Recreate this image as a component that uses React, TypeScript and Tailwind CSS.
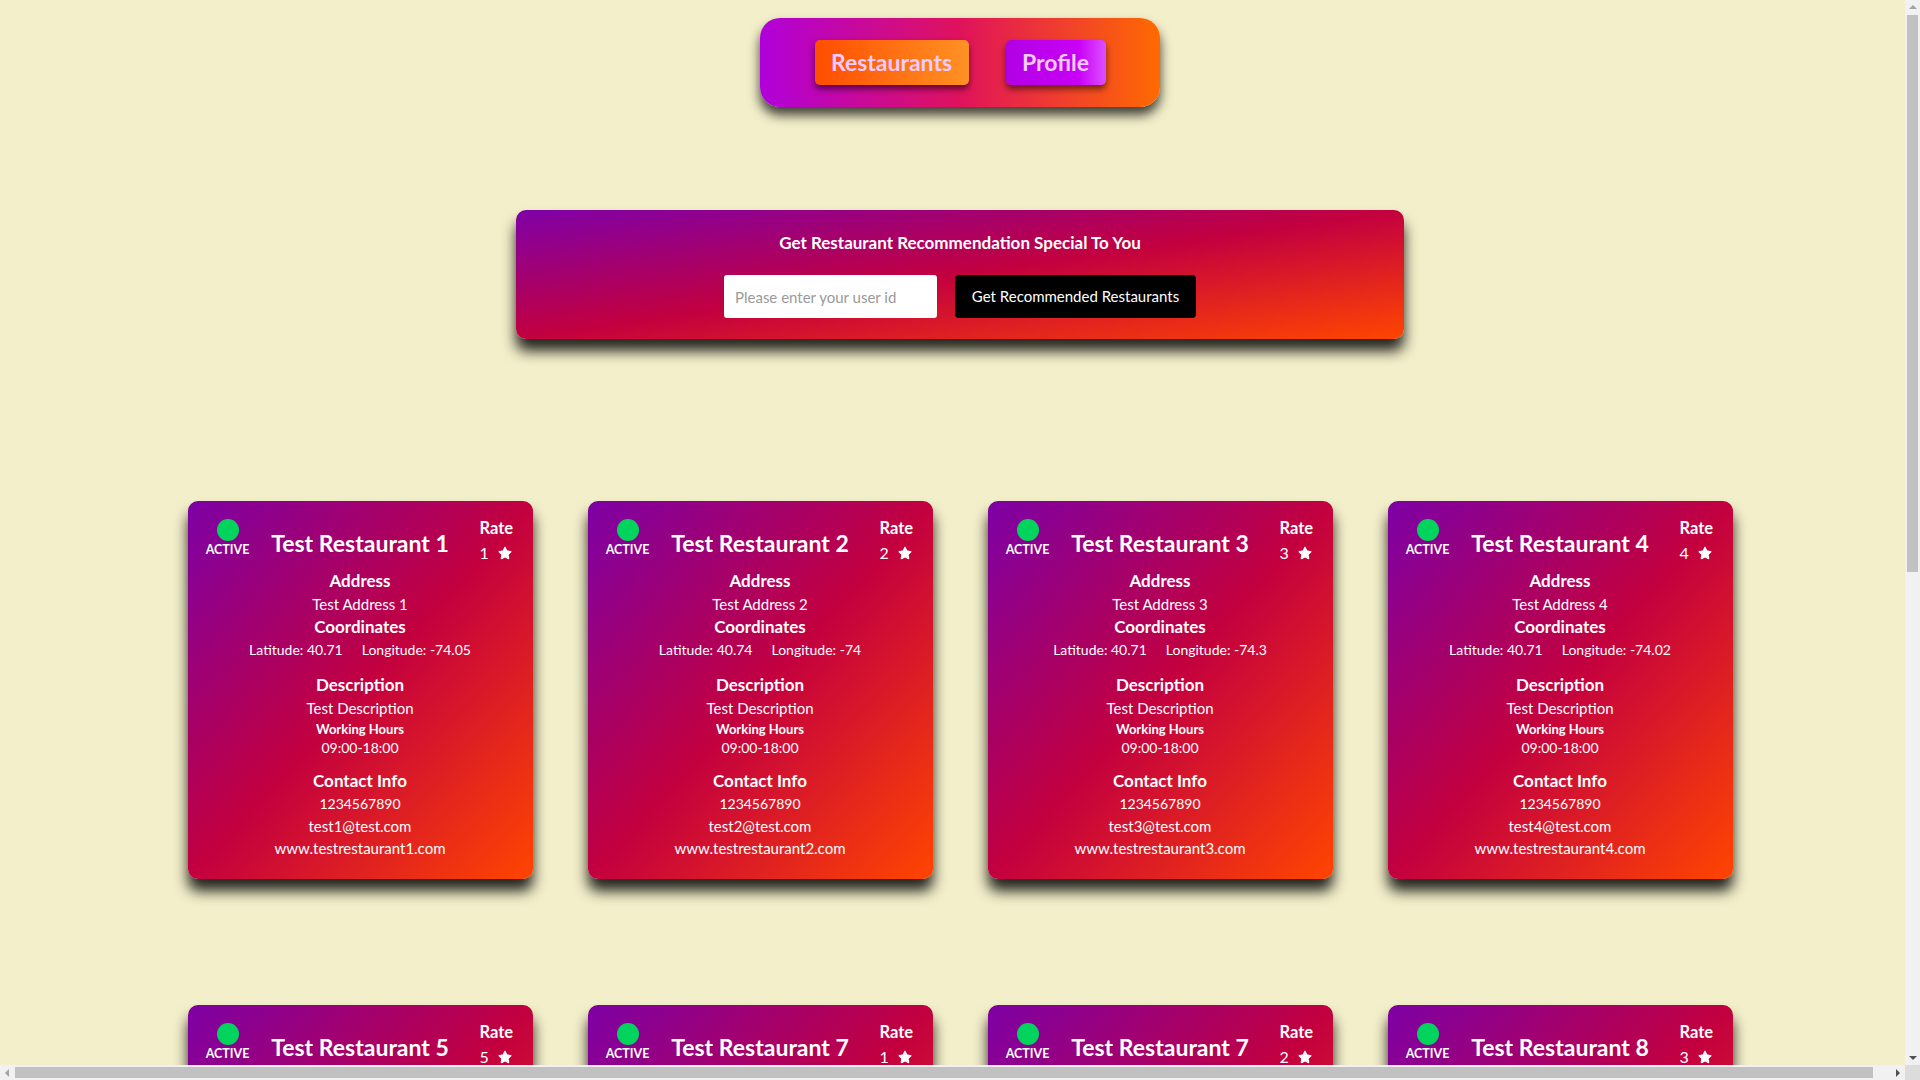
import { FaStar } from 'react-icons/fa';

type Restaurant = {
  id: number;
  name: string;
  rate: number;
  address: string;
  lat: string;
  lng: string;
  phone: string;
  email: string;
  web: string;
};

const restaurants: Restaurant[] = [
  { id: 1, name: 'Test Restaurant 1', rate: 1, address: 'Test Address 1', lat: '40.71', lng: '-74.05', phone: '1234567890', email: 'test1@test.com', web: 'www.testrestaurant1.com' },
  { id: 2, name: 'Test Restaurant 2', rate: 2, address: 'Test Address 2', lat: '40.74', lng: '-74', phone: '1234567890', email: 'test2@test.com', web: 'www.testrestaurant2.com' },
  { id: 3, name: 'Test Restaurant 3', rate: 3, address: 'Test Address 3', lat: '40.71', lng: '-74.3', phone: '1234567890', email: 'test3@test.com', web: 'www.testrestaurant3.com' },
  { id: 4, name: 'Test Restaurant 4', rate: 4, address: 'Test Address 4', lat: '40.71', lng: '-74.02', phone: '1234567890', email: 'test4@test.com', web: 'www.testrestaurant4.com' },
  { id: 5, name: 'Test Restaurant 5', rate: 5, address: 'Test Address 5', lat: '40.72', lng: '-74.01', phone: '1234567890', email: 'test5@test.com', web: 'www.testrestaurant5.com' },
  { id: 6, name: 'Test Restaurant 7', rate: 1, address: 'Test Address 7', lat: '40.73', lng: '-74.04', phone: '1234567890', email: 'test7@test.com', web: 'www.testrestaurant7.com' },
  { id: 7, name: 'Test Restaurant 7', rate: 2, address: 'Test Address 7', lat: '40.73', lng: '-74.04', phone: '1234567890', email: 'test7@test.com', web: 'www.testrestaurant7.com' },
  { id: 8, name: 'Test Restaurant 8', rate: 3, address: 'Test Address 8', lat: '40.75', lng: '-74.03', phone: '1234567890', email: 'test8@test.com', web: 'www.testrestaurant8.com' },
  { id: 9, name: 'Test Restaurant 9', rate: 4, address: 'Test Address 9', lat: '40.7', lng: '-74.06', phone: '1234567890', email: 'test9@test.com', web: 'www.testrestaurant9.com' },
  { id: 10, name: 'Test Restaurant 10', rate: 5, address: 'Test Address 10', lat: '40.76', lng: '-74.08', phone: '1234567890', email: 'test10@test.com', web: 'www.testrestaurant10.com' },
];

function RestaurantCard({ r }: { r: Restaurant }) {
  return (
    <div className="h-[378px] rounded-[10px] bg-[linear-gradient(to_bottom_right,#7d00a6,#c3003f,#ff4500)] px-[19px] pt-[16px] text-center text-white shadow-[0_12px_14px_rgba(0,0,0,0.85)]">
      <div className="flex items-start justify-between">
        <div className="flex w-[42px] flex-col items-center pt-[2px]">
          <div className="h-[22px] w-[22px] rounded-full bg-[#00d45c]" />
          <span className="text-[12.5px] font-bold leading-[17px]">ACTIVE</span>
        </div>
        <h2 className="mr-[8px] mt-[11px] text-[23px] font-bold leading-[30px]">{r.name}</h2>
        <div className="flex w-[34px] flex-col items-start">
          <span className="text-[16.5px] font-bold leading-[22px]">Rate</span>
          <span className="mt-[3px] flex items-center gap-[9px] text-[16px] leading-[22px]">
            {r.rate}
            <FaStar className="h-[14px] w-[14px]" />
          </span>
        </div>
      </div>
      <div className="mt-[5px]">
        <h3 className="text-[17px] font-bold leading-[24px]">Address</h3>
        <p className="text-[15px] leading-[22px]">{r.address}</p>
        <h3 className="text-[17px] font-bold leading-[24px]">Coordinates</h3>
        <p className="flex justify-center gap-[19px] text-[14px] leading-[22px]">
          <span>Latitude: {r.lat}</span>
          <span>Longitude: {r.lng}</span>
        </p>
        <h3 className="mt-[12px] text-[17px] font-bold leading-[24px]">Description</h3>
        <p className="text-[15px] leading-[22px]">Test Description</p>
        <h4 className="text-[13px] font-bold leading-[20px]">Working Hours</h4>
        <p className="text-[14px] leading-[18px]">09:00-18:00</p>
        <h3 className="mt-[12px] text-[17px] font-bold leading-[24px]">Contact Info</h3>
        <p className="text-[14px] leading-[22px]">{r.phone}</p>
        <p className="text-[15px] leading-[22px]">{r.email}</p>
        <p className="text-[15px] leading-[22px]">{r.web}</p>
      </div>
    </div>
  );
}

function FakeScrollbars() {
  return (
    <>
      <div className="fixed right-0 top-0 flex h-[1065px] w-[15px] flex-col items-center bg-[#f1f1f1]">
        <div className="mt-[5px] h-0 w-0 border-x-[4px] border-b-[4px] border-x-transparent border-b-[#a3a3a3]" />
        <div className="mt-[6px] h-[557px] w-[11px] bg-[#c1c1c1]" />
        <div className="mt-auto mb-[5px] h-0 w-0 border-x-[4px] border-t-[4px] border-x-transparent border-t-[#505050]" />
      </div>
      <div className="fixed bottom-0 left-0 flex h-[15px] w-[1905px] items-center bg-[#f1f1f1]">
        <div className="ml-[5px] h-0 w-0 border-y-[4px] border-r-[4px] border-y-transparent border-r-[#a3a3a3]" />
        <div className="ml-[6px] h-[11px] w-[1858px] bg-[#c1c1c1]" />
        <div className="ml-auto mr-[5px] h-0 w-0 border-y-[4px] border-l-[4px] border-y-transparent border-l-[#505050]" />
      </div>
      <div className="fixed bottom-0 right-0 h-[15px] w-[15px] bg-[#dcdcdc]" />
    </>
  );
}

export default function App() {
  return (
    <div className="min-h-screen w-[1920px] bg-[#f3efca] pb-[126px] font-['Lato',sans-serif]">
      <nav className="mx-auto flex h-[89px] w-[400px] translate-y-[18px] items-center justify-center gap-[37px] rounded-[20px] bg-[linear-gradient(to_right,#b000da,#e0125c,#ff6a00)] shadow-[0_8px_12px_rgba(0,0,0,0.75)]">
        <button className="h-[45px] w-[154px] rounded-[5px] bg-[linear-gradient(to_right,#ff4d00,#ff9224)] text-[23px] font-bold text-[#f6caff] shadow-[0_4px_6px_rgba(0,0,0,0.55)]">
          Restaurants
        </button>
        <button className="h-[45px] w-[100px] rounded-[5px] bg-[linear-gradient(to_right,#b200e4,#c800f6_72%,#dc50ff)] text-[23px] font-bold text-[#f6caff] shadow-[0_4px_6px_rgba(0,0,0,0.55)]">
          Profile
        </button>
      </nav>

      <section className="mx-auto mt-[121px] flex h-[129px] w-[888px] flex-col items-center rounded-[10px] bg-[linear-gradient(to_bottom_right,#7f00a8,#c3003f,#ff4500)] pt-[22px] shadow-[0_12px_14px_rgba(0,0,0,0.85)]">
        <h2 className="text-[17px] font-bold leading-[22px] text-white">Get Restaurant Recommendation Special To You</h2>
        <div className="mt-[21px] flex gap-[18px]">
          <input
            className="h-[43px] w-[213px] rounded-[3px] bg-white px-[11px] text-[15px] text-gray-800 outline-none placeholder:text-[#9a9a9a]"
            placeholder="Please enter your user id"
          />
          <button className="h-[43px] w-[241px] rounded-[4px] bg-black text-[15px] text-white">Get Recommended Restaurants</button>
        </div>
      </section>

      <div className="mx-auto mt-[162px] grid w-[1545px] grid-cols-4 gap-x-[55px] gap-y-[126px]">
        {restaurants.map((r) => (
          <RestaurantCard key={r.id} r={r} />
        ))}
      </div>

      <FakeScrollbars />
    </div>
  );
}
